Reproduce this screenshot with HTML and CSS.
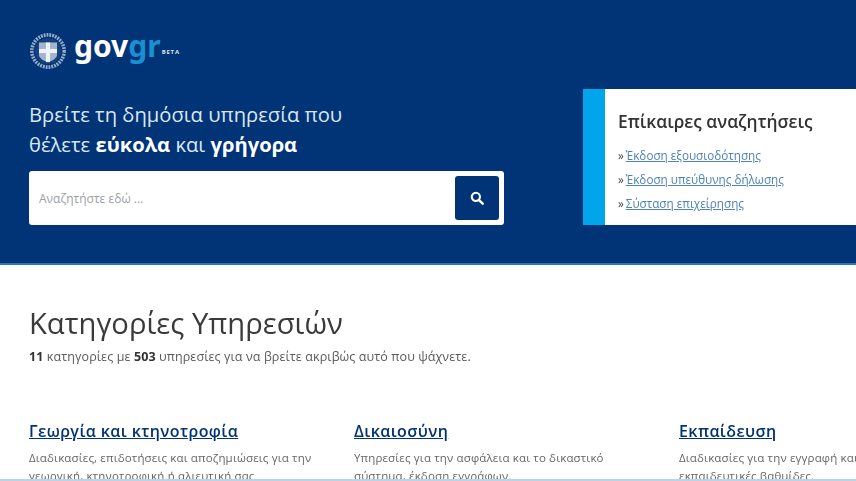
FILE: index.html
```html
<!DOCTYPE html>
<html lang="el">
<head>
<meta charset="utf-8">
<title>gov.gr</title>
<link rel="stylesheet" href="styles.css">
</head>
<body>
<div class="page">
  <header class="hero">
    <div class="hero-left">
      <div class="logo">
        <svg class="emblem" viewBox="0 0 40 40" aria-hidden="true">
          <circle cx="20" cy="20" r="17" fill="none" stroke="#95a9c4" stroke-width="3.8" stroke-dasharray="2 1"/>
          <circle cx="20" cy="20" r="13.8" fill="#14427f"/>
          <path d="M10.500 11h19v13c0 3.500-4 6-9.500 8-5.500-2-9.500-4.500-9.500-8z" fill="#a3b5cd"/>
          <path d="M17.800 11h4.400v6.800h7.300v4.200h-7.300v9.500h-4.400v-9.500h-7.300v-4.200h7.300z" fill="#eef2f8"/>
        </svg>
        <span class="wordmark"><span class="gov">gov</span><span class="gr">gr</span></span>
        <span class="beta">BETA</span>
      </div>
      <h1 class="tagline">Βρείτε τη δημόσια υπηρεσία που<br>θέλετε <b>εύκολα</b> και <b>γρήγορα</b></h1>
      <form class="search">
        <span class="placeholder">Αναζητήστε εδώ ...</span>
        <button class="search-btn" type="button" aria-label="Αναζήτηση">
          <svg viewBox="0 0 16 16" width="14" height="14" aria-hidden="true">
            <circle cx="6.700" cy="6.700" r="4.700" fill="none" stroke="#fff" stroke-width="2.400"/>
            <path d="M10.300 10.300l4.200 4.200" stroke="#fff" stroke-width="2.800" stroke-linecap="round"/>
          </svg>
        </button>
      </form>
    </div>
    <aside class="trending">
      <h2 class="trending-title">Επίκαιρες αναζητήσεις</h2>
      <ul class="trending-list">
        <li><a href="#">Έκδοση εξουσιοδότησης</a></li>
        <li><a href="#">Έκδοση υπεύθυνης δήλωσης</a></li>
        <li><a href="#">Σύσταση επιχείρησης</a></li>
      </ul>
    </aside>
  </header>
  <main class="content">
    <h2 class="section-title">Κατηγορίες Υπηρεσιών</h2>
    <p class="section-sub"><b>11</b> κατηγορίες με <b>503</b> υπηρεσίες για να βρείτε ακριβώς αυτό που ψάχνετε.</p>
    <div class="cats">
      <article class="cat">
        <h3><a href="#">Γεωργία και κτηνοτροφία</a></h3>
        <p>Διαδικασίες, επιδοτήσεις και αποζημιώσεις για την γεωργική, κτηνοτροφική ή αλιευτική σας δραστηριότητα.</p>
      </article>
      <article class="cat">
        <h3><a href="#">Δικαιοσύνη</a></h3>
        <p>Υπηρεσίες για την ασφάλεια και το δικαστικό σύστημα, έκδοση εγγράφων.</p>
      </article>
      <article class="cat">
        <h3><a href="#">Εκπαίδευση</a></h3>
        <p>Διαδικασίες για την εγγραφή και τις<br>εκπαιδευτικές βαθμίδες.</p>
      </article>
    </div>
  </main>
  <div class="edge"></div>
</div>
</body>
</html>
```
FILE: styles.css
```css
* { box-sizing: border-box; }
html, body { margin: 0; height: 100%; overflow: hidden; background: #fff; }
.page {
  position: relative;
  width: 856px;
  height: 481px;
  overflow: hidden;
  font-family: "Open Sans", "Noto Sans", sans-serif;
  filter: blur(0.6px);
}
.hero {
  height: 265px;
  background: #003476;
  border-bottom: 2px solid #2a78b8;
  padding: 0 0 38px 29px;
  display: flex;
  align-items: flex-end;
  gap: 79px;
}
.hero-left { width: 475px; flex: none; }
.logo { display: flex; align-items: center; height: 38px; margin-bottom: 29px; }
.emblem { width: 38px; height: 38px; flex: none; }
.wordmark { font-family: "Noto Sans", sans-serif; font-weight: 700; font-size: 30px; line-height: 38px; margin-left: 7px; position: relative; top: -5px; }
.gov { color: #fff; }
.gr { color: #1a8fd1; }
.beta { color: #dfe8f2; font-size: 6px; letter-spacing: 0.8px; font-weight: 700; margin: 2px 0 0 1px; }
.tagline { margin: 0 0 12px; font-size: 20.200px; line-height: 30px; font-weight: 400; color: #dce6f2; }
.tagline b { color: #fff; font-weight: 700; }
.search {
  height: 54px;
  background: #fff;
  border-radius: 3px;
  display: flex;
  align-items: center;
  justify-content: space-between;
  padding: 0 5px 0 10px;
}
.placeholder { font-size: 12px; color: #9a9ea4; }
.search-btn {
  width: 44px;
  height: 44px;
  border: 0;
  border-radius: 3px;
  background: #003476;
  display: flex;
  align-items: center;
  justify-content: center;
  padding: 0;
}
.trending {
  flex: 1;
  height: 136px;
  background: #fff;
  border-left: 22px solid #00a5ec;
  padding: 21px 0 0 13px;
}
.trending-title { margin: 0 0 11px; font-size: 17.400px; line-height: 22px; font-weight: 600; color: #333; white-space: nowrap; }
.trending-list { list-style: none; margin: 0; padding: 0; }
.trending-list li { font-size: 11.700px; line-height: 24px; color: #555; white-space: nowrap; }
.trending-list li::before { content: "»"; margin-right: 2px; color: #444; }
.trending-list a { color: #4f82b5; }
.content { padding: 40px 0 0 29px; }
.section-title { margin: 0; font-size: 29.200px; line-height: 36px; font-weight: 400; color: #3a3a3a; }
.section-sub { margin: 7px 0 0; font-size: 12.500px; letter-spacing: 0.1px; line-height: 18px; color: #5a5a5a; }
.section-sub b { color: #333; }
.cats { display: flex; margin-top: 55px; }
.cat { width: 325px; flex: none; padding-right: 40px; }
.cat h3 { margin: 0 0 8px; font-size: 16px; letter-spacing: 0.4px; line-height: 20px; font-weight: 600; }
.cat h3 a { color: #003476; }
.cat p { margin: 0; font-size: 11.500px; letter-spacing: 0.15px; line-height: 18px; color: #666; }
.edge { position: absolute; left: 0; right: 0; bottom: 0; height: 2px; background: #b9d3e8; }
```
